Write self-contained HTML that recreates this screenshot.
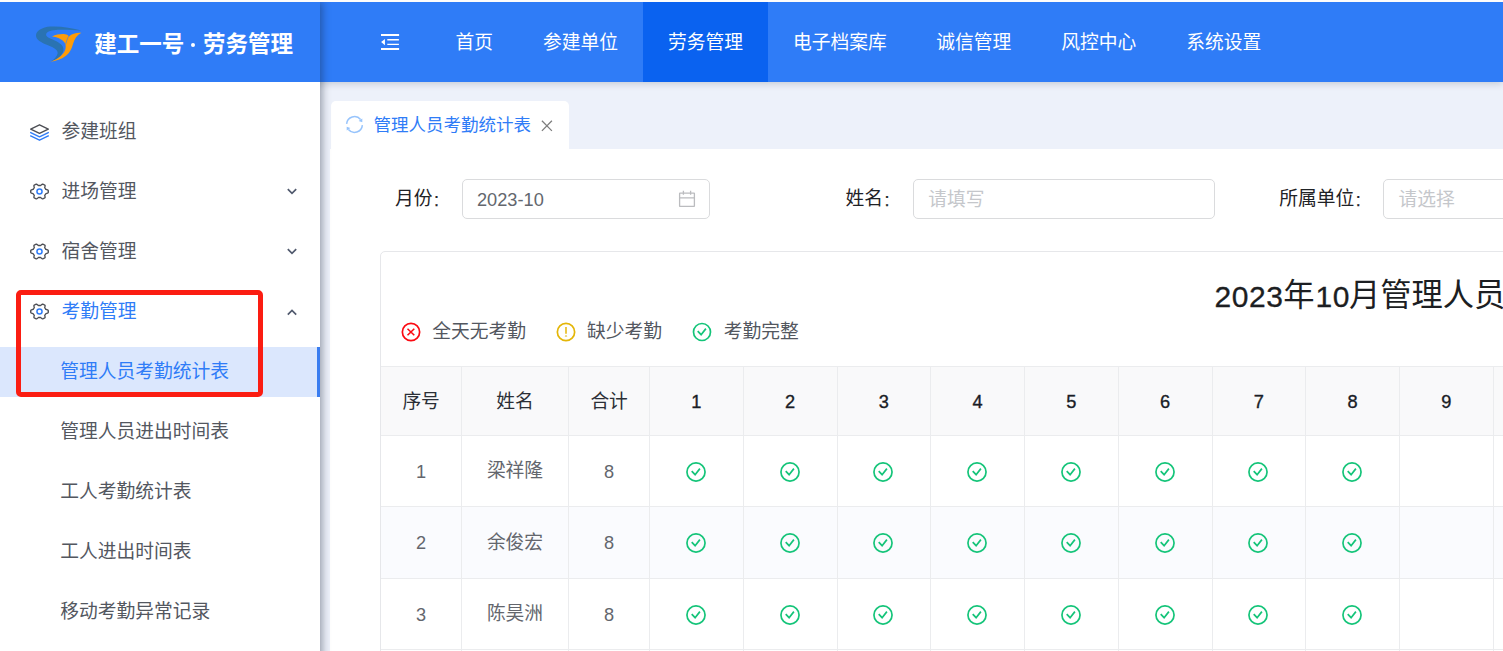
<!DOCTYPE html>
<html lang="zh-CN"><head><meta charset="utf-8"><title>管理人员考勤统计表</title>
<style>
html,body{margin:0;padding:0}
body{width:1503px;height:651px;overflow:hidden;position:relative;background:#edf1fa;font-family:"Liberation Sans","Noto Sans CJK SC",sans-serif}
.abs{position:absolute;display:block}
.t{white-space:nowrap}
.c{text-align:center}
.cj{font-family:"Liberation Sans","Noto Sans CJK SC",sans-serif}
.num{font-family:"Liberation Sans",sans-serif}
.tn{font-size:30px;letter-spacing:0.5px;-webkit-text-stroke:0.3px currentColor}
.hn{-webkit-text-stroke:0.35px currentColor}
.col{display:inline-block;width:6px;text-align:center;margin-left:1px;-webkit-text-stroke:0.25px currentColor;font-size:18px;position:relative;top:1.2px}
.inp{box-sizing:border-box;border:1px solid #dadbdd;border-radius:5px;background:#fff}
.hl{height:1px;background:#ebecee}
.vl{width:1px;background:#ebecee}
.hdr{box-shadow:0 1px 8px rgba(0,21,41,.2)}
.side{background:#fff;box-shadow:2px 0 8px rgba(20,30,50,.42)}
</style></head>
<body>
<header>
<div class="abs hdr" style="left:0;top:2px;width:1503px;height:80px;background:#2f7cf7"></div>
<div class="abs" style="left:643px;top:2px;width:125px;height:80px;background:#0a62f0"></div>
<svg class="abs" style="left:381px;top:33px" width="19" height="18" viewBox="0 0 19 18"><path d="M0 1.05h18.1v1.9H0zM6.3 6h11.6v1.45H6.3zM6.3 10.65h11.6v1.45H6.3zM0 15.05h18.1v1.9H0zM3.95 5.9v6.3L0.1 9.05z" fill="#fff"/></svg>
<div class="abs t " style="left:455.6px;top:27.5px;font-size:18.75px;color:#fff;height:30px;line-height:30px"><span class="cj">首页</span></div>
<div class="abs t " style="left:543.1px;top:27.5px;font-size:18.75px;color:#fff;height:30px;line-height:30px"><span class="cj">参建单位</span></div>
<div class="abs t " style="left:668.1px;top:27.5px;font-size:18.75px;color:#fff;height:30px;line-height:30px"><span class="cj">劳务管理</span></div>
<div class="abs t " style="left:793.1px;top:27.5px;font-size:18.75px;color:#fff;height:30px;line-height:30px"><span class="cj">电子档案库</span></div>
<div class="abs t " style="left:936.3px;top:27.5px;font-size:18.75px;color:#fff;height:30px;line-height:30px"><span class="cj">诚信管理</span></div>
<div class="abs t " style="left:1061.3px;top:27.5px;font-size:18.75px;color:#fff;height:30px;line-height:30px"><span class="cj">风控中心</span></div>
<div class="abs t " style="left:1186.3px;top:27.5px;font-size:18.75px;color:#fff;height:30px;line-height:30px"><span class="cj">系统设置</span></div>
</header>
<main>
<div class="abs" style="left:331px;top:101px;width:238px;height:50px;background:#fff;border-radius:5px 5px 0 0"></div>
<div class="abs" style="left:330px;top:148.5px;width:1180px;height:510px;background:#fff"></div>
<svg class="abs" style="left:345.1px;top:115.1px" width="19" height="19" viewBox="0 0 19 19"><g fill="none" stroke="#97c4fc" stroke-width="1.5"><path d="M1.63 8.81A7.9 7.9 0 0 1 15.6 4.5"/><path d="M17.37 10.19A7.9 7.9 0 0 1 3.4 14.5"/></g><path d="M17.3 3.6V7.3L13.6 6.1ZM1.7 15.4V11.7L5.4 12.9Z" fill="#97c4fc"/></svg>
<div class="abs t " style="left:373.6px;top:110px;font-size:17.5px;color:#2f7cf7;height:30px;line-height:30px"><span class="cj">管理人员考勤统计表</span></div>
<svg class="abs" style="left:540.5px;top:119.5px" width="12" height="12" viewBox="0 0 12 12"><path d="M0.9 0.7L10.9 10.9M10.9 0.7L0.9 10.9" stroke="#7d7d7d" stroke-width="1.25" fill="none"/></svg>
<div class="abs t " style="left:395px;top:184px;font-size:18.75px;color:#1f2226;height:30px;line-height:30px"><span class="cj">月份</span><span class="col">:</span></div>
<div class="abs inp" style="left:462px;top:179px;width:248px;height:40px"></div>
<div class="abs t " style="left:477px;top:184.5px;font-size:18.2px;color:#63676e;height:30px;line-height:30px">2023-10</div>
<svg class="abs" style="left:678px;top:189.8px" width="18" height="18" viewBox="0 0 18 18"><g fill="none" stroke="#bbbcbf" stroke-width="1.3"><rect x="1.6" y="3.2" width="14.8" height="13.2" rx="0.3"/><path d="M1.6 7.8h14.8M5.4 0.8v4M12.6 0.8v4"/></g></svg>
<div class="abs t " style="left:845.5px;top:184px;font-size:18.75px;color:#1f2226;height:30px;line-height:30px"><span class="cj">姓名</span><span class="col">:</span></div>
<div class="abs inp" style="left:912.5px;top:179px;width:302px;height:40px"></div>
<div class="abs t " style="left:928.3px;top:184.8px;font-size:18.75px;color:#c5c7cb;height:30px;line-height:30px"><span class="cj">请填写</span></div>
<div class="abs t " style="left:1279.3px;top:184px;font-size:18.75px;color:#1f2226;height:30px;line-height:30px"><span class="cj">所属单位</span><span class="col">:</span></div>
<div class="abs inp" style="left:1383px;top:179px;width:200px;height:40px"></div>
<div class="abs t " style="left:1398.4px;top:184.8px;font-size:18.75px;color:#c5c7cb;height:30px;line-height:30px"><span class="cj">请选择</span></div>
<div class="abs" style="left:380px;top:251px;width:1200px;height:500px;border:1px solid #e6e7ea;border-radius:5px"></div>
<div class="abs t nw" style="left:1214.6px;top:282.3px;font-size:31.25px;color:#1c1e22;height:30px;line-height:30px"><span class="num tn">2023</span></div>
<div class="abs t nw" style="left:1283.33px;top:280.6px;font-size:31.25px;color:#1c1e22;height:30px;line-height:30px"><span class="cj">年</span></div>
<div class="abs t nw" style="left:1315.6px;top:282.3px;font-size:31.25px;color:#1c1e22;height:30px;line-height:30px"><span class="num tn">10</span></div>
<div class="abs t nw" style="left:1348.95px;top:280.6px;font-size:31.25px;color:#1c1e22;height:30px;line-height:30px"><span class="cj">月管理人员考勤统计表</span></div>
<svg class="abs" style="left:399.5px;top:321.4px" width="22" height="22" viewBox="-11 -11 22 22"><circle r="8.65" fill="none" stroke="#fb0a12" stroke-width="1.7"/><path d="M-3.5 -3.3 L3.3 3.2 M3.3 -3.3 L-3.5 3.2" fill="none" stroke="#fb0a12" stroke-width="1.55"/></svg>
<div class="abs t " style="left:432.3px;top:317.3px;font-size:18.75px;color:#53575f;height:30px;line-height:30px"><span class="cj">全天无考勤</span></div>
<svg class="abs" style="left:554.5px;top:321.4px" width="22" height="22" viewBox="-11 -11 22 22"><circle r="8.65" fill="none" stroke="#e4b608" stroke-width="1.7"/><path d="M0 -5.0 L0 1.7" fill="none" stroke="#e4b608" stroke-width="1.5"/><path d="M0 2.9 L1.4 4.6 L-1.4 4.6Z" fill="#e4b608"/></svg>
<div class="abs t " style="left:587px;top:317.3px;font-size:18.75px;color:#53575f;height:30px;line-height:30px"><span class="cj">缺少考勤</span></div>
<svg class="abs" style="left:691.1px;top:321.4px" width="22" height="22" viewBox="-11 -11 22 22"><circle r="8.5" fill="none" stroke="#14c479" stroke-width="1.7"/><path d="M-4.3 -0.8 L-0.9 2.7 L3.9 -3.4" fill="none" stroke="#14c479" stroke-width="1.7"/></svg>
<div class="abs t " style="left:723.7px;top:317.3px;font-size:18.75px;color:#53575f;height:30px;line-height:30px"><span class="cj">考勤完整</span></div>
<div class="abs" style="left:381px;top:366.5px;width:1200px;height:68.75px;background:#f9f9fa"></div>
<div class="abs" style="left:381px;top:506.75px;width:1200px;height:71.5px;background:#fafbfe"></div>
<div class="abs hl" style="left:381px;top:366px;width:1200px"></div>
<div class="abs hl" style="left:381px;top:434.75px;width:1200px"></div>
<div class="abs hl" style="left:381px;top:506.25px;width:1200px"></div>
<div class="abs hl" style="left:381px;top:577.75px;width:1200px"></div>
<div class="abs hl" style="left:381px;top:649.25px;width:1200px"></div>
<div class="abs vl" style="left:460.75px;top:366.5px;height:300px"></div>
<div class="abs vl" style="left:568.25px;top:366.5px;height:300px"></div>
<div class="abs vl" style="left:649px;top:366.5px;height:300px"></div>
<div class="abs vl" style="left:742.75px;top:366.5px;height:300px"></div>
<div class="abs vl" style="left:836.5px;top:366.5px;height:300px"></div>
<div class="abs vl" style="left:930.25px;top:366.5px;height:300px"></div>
<div class="abs vl" style="left:1024px;top:366.5px;height:300px"></div>
<div class="abs vl" style="left:1117.75px;top:366.5px;height:300px"></div>
<div class="abs vl" style="left:1211.5px;top:366.5px;height:300px"></div>
<div class="abs vl" style="left:1305.25px;top:366.5px;height:300px"></div>
<div class="abs vl" style="left:1399px;top:366.5px;height:300px"></div>
<div class="abs vl" style="left:1492.75px;top:366.5px;height:300px"></div>
<div class="abs vl" style="left:1586.5px;top:366.5px;height:300px"></div>
<div class="abs vl" style="left:1680.25px;top:366.5px;height:300px"></div>
<div class="abs t c" style="left:321.125px;top:386.675px;width:200px;font-size:18.75px;color:#2b2f36;height:30px;line-height:30px"><span class="cj">序号</span></div>
<div class="abs t c" style="left:415px;top:386.675px;width:200px;font-size:18.75px;color:#2b2f36;height:30px;line-height:30px"><span class="cj">姓名</span></div>
<div class="abs t c" style="left:509.125px;top:386.675px;width:200px;font-size:18.75px;color:#2b2f36;height:30px;line-height:30px"><span class="cj">合计</span></div>
<div class="abs t c" style="left:596.375px;top:387.475px;width:200px;font-size:18.2px;color:#1a1d26;height:30px;line-height:30px"><span class="num hn">1</span></div>
<div class="abs t c" style="left:690.125px;top:387.475px;width:200px;font-size:18.2px;color:#1a1d26;height:30px;line-height:30px"><span class="num hn">2</span></div>
<div class="abs t c" style="left:783.875px;top:387.475px;width:200px;font-size:18.2px;color:#1a1d26;height:30px;line-height:30px"><span class="num hn">3</span></div>
<div class="abs t c" style="left:877.625px;top:387.475px;width:200px;font-size:18.2px;color:#1a1d26;height:30px;line-height:30px"><span class="num hn">4</span></div>
<div class="abs t c" style="left:971.375px;top:387.475px;width:200px;font-size:18.2px;color:#1a1d26;height:30px;line-height:30px"><span class="num hn">5</span></div>
<div class="abs t c" style="left:1065.12px;top:387.475px;width:200px;font-size:18.2px;color:#1a1d26;height:30px;line-height:30px"><span class="num hn">6</span></div>
<div class="abs t c" style="left:1158.88px;top:387.475px;width:200px;font-size:18.2px;color:#1a1d26;height:30px;line-height:30px"><span class="num hn">7</span></div>
<div class="abs t c" style="left:1252.62px;top:387.475px;width:200px;font-size:18.2px;color:#1a1d26;height:30px;line-height:30px"><span class="num hn">8</span></div>
<div class="abs t c" style="left:1346.38px;top:387.475px;width:200px;font-size:18.2px;color:#1a1d26;height:30px;line-height:30px"><span class="num hn">9</span></div>
<div class="abs t c" style="left:321.125px;top:456.8px;width:200px;font-size:18.2px;color:#63666d;height:30px;line-height:30px"><span class="num">1</span></div>
<div class="abs t c" style="left:415px;top:456.3px;width:200px;font-size:18.75px;color:#63666d;height:30px;line-height:30px"><span class="cj">梁祥隆</span></div>
<div class="abs t c" style="left:509.125px;top:456.8px;width:200px;font-size:18.2px;color:#63666d;height:30px;line-height:30px"><span class="num">8</span></div>
<svg class="abs" style="left:684.975px;top:460.9px" width="22" height="22" viewBox="-11 -11 22 22"><circle r="9.05" fill="none" stroke="#14c479" stroke-width="1.7"/><path d="M-4.3 -0.8 L-0.9 2.7 L3.9 -3.4" fill="none" stroke="#14c479" stroke-width="1.7"/></svg>
<svg class="abs" style="left:778.725px;top:460.9px" width="22" height="22" viewBox="-11 -11 22 22"><circle r="9.05" fill="none" stroke="#14c479" stroke-width="1.7"/><path d="M-4.3 -0.8 L-0.9 2.7 L3.9 -3.4" fill="none" stroke="#14c479" stroke-width="1.7"/></svg>
<svg class="abs" style="left:872.475px;top:460.9px" width="22" height="22" viewBox="-11 -11 22 22"><circle r="9.05" fill="none" stroke="#14c479" stroke-width="1.7"/><path d="M-4.3 -0.8 L-0.9 2.7 L3.9 -3.4" fill="none" stroke="#14c479" stroke-width="1.7"/></svg>
<svg class="abs" style="left:966.225px;top:460.9px" width="22" height="22" viewBox="-11 -11 22 22"><circle r="9.05" fill="none" stroke="#14c479" stroke-width="1.7"/><path d="M-4.3 -0.8 L-0.9 2.7 L3.9 -3.4" fill="none" stroke="#14c479" stroke-width="1.7"/></svg>
<svg class="abs" style="left:1059.97px;top:460.9px" width="22" height="22" viewBox="-11 -11 22 22"><circle r="9.05" fill="none" stroke="#14c479" stroke-width="1.7"/><path d="M-4.3 -0.8 L-0.9 2.7 L3.9 -3.4" fill="none" stroke="#14c479" stroke-width="1.7"/></svg>
<svg class="abs" style="left:1153.72px;top:460.9px" width="22" height="22" viewBox="-11 -11 22 22"><circle r="9.05" fill="none" stroke="#14c479" stroke-width="1.7"/><path d="M-4.3 -0.8 L-0.9 2.7 L3.9 -3.4" fill="none" stroke="#14c479" stroke-width="1.7"/></svg>
<svg class="abs" style="left:1247.47px;top:460.9px" width="22" height="22" viewBox="-11 -11 22 22"><circle r="9.05" fill="none" stroke="#14c479" stroke-width="1.7"/><path d="M-4.3 -0.8 L-0.9 2.7 L3.9 -3.4" fill="none" stroke="#14c479" stroke-width="1.7"/></svg>
<svg class="abs" style="left:1341.22px;top:460.9px" width="22" height="22" viewBox="-11 -11 22 22"><circle r="9.05" fill="none" stroke="#14c479" stroke-width="1.7"/><path d="M-4.3 -0.8 L-0.9 2.7 L3.9 -3.4" fill="none" stroke="#14c479" stroke-width="1.7"/></svg>
<div class="abs t c" style="left:321.125px;top:528.3px;width:200px;font-size:18.2px;color:#63666d;height:30px;line-height:30px"><span class="num">2</span></div>
<div class="abs t c" style="left:415px;top:527.8px;width:200px;font-size:18.75px;color:#63666d;height:30px;line-height:30px"><span class="cj">余俊宏</span></div>
<div class="abs t c" style="left:509.125px;top:528.3px;width:200px;font-size:18.2px;color:#63666d;height:30px;line-height:30px"><span class="num">8</span></div>
<svg class="abs" style="left:684.975px;top:532.4px" width="22" height="22" viewBox="-11 -11 22 22"><circle r="9.05" fill="none" stroke="#14c479" stroke-width="1.7"/><path d="M-4.3 -0.8 L-0.9 2.7 L3.9 -3.4" fill="none" stroke="#14c479" stroke-width="1.7"/></svg>
<svg class="abs" style="left:778.725px;top:532.4px" width="22" height="22" viewBox="-11 -11 22 22"><circle r="9.05" fill="none" stroke="#14c479" stroke-width="1.7"/><path d="M-4.3 -0.8 L-0.9 2.7 L3.9 -3.4" fill="none" stroke="#14c479" stroke-width="1.7"/></svg>
<svg class="abs" style="left:872.475px;top:532.4px" width="22" height="22" viewBox="-11 -11 22 22"><circle r="9.05" fill="none" stroke="#14c479" stroke-width="1.7"/><path d="M-4.3 -0.8 L-0.9 2.7 L3.9 -3.4" fill="none" stroke="#14c479" stroke-width="1.7"/></svg>
<svg class="abs" style="left:966.225px;top:532.4px" width="22" height="22" viewBox="-11 -11 22 22"><circle r="9.05" fill="none" stroke="#14c479" stroke-width="1.7"/><path d="M-4.3 -0.8 L-0.9 2.7 L3.9 -3.4" fill="none" stroke="#14c479" stroke-width="1.7"/></svg>
<svg class="abs" style="left:1059.97px;top:532.4px" width="22" height="22" viewBox="-11 -11 22 22"><circle r="9.05" fill="none" stroke="#14c479" stroke-width="1.7"/><path d="M-4.3 -0.8 L-0.9 2.7 L3.9 -3.4" fill="none" stroke="#14c479" stroke-width="1.7"/></svg>
<svg class="abs" style="left:1153.72px;top:532.4px" width="22" height="22" viewBox="-11 -11 22 22"><circle r="9.05" fill="none" stroke="#14c479" stroke-width="1.7"/><path d="M-4.3 -0.8 L-0.9 2.7 L3.9 -3.4" fill="none" stroke="#14c479" stroke-width="1.7"/></svg>
<svg class="abs" style="left:1247.47px;top:532.4px" width="22" height="22" viewBox="-11 -11 22 22"><circle r="9.05" fill="none" stroke="#14c479" stroke-width="1.7"/><path d="M-4.3 -0.8 L-0.9 2.7 L3.9 -3.4" fill="none" stroke="#14c479" stroke-width="1.7"/></svg>
<svg class="abs" style="left:1341.22px;top:532.4px" width="22" height="22" viewBox="-11 -11 22 22"><circle r="9.05" fill="none" stroke="#14c479" stroke-width="1.7"/><path d="M-4.3 -0.8 L-0.9 2.7 L3.9 -3.4" fill="none" stroke="#14c479" stroke-width="1.7"/></svg>
<div class="abs t c" style="left:321.125px;top:599.8px;width:200px;font-size:18.2px;color:#63666d;height:30px;line-height:30px"><span class="num">3</span></div>
<div class="abs t c" style="left:415px;top:599.3px;width:200px;font-size:18.75px;color:#63666d;height:30px;line-height:30px"><span class="cj">陈昊洲</span></div>
<div class="abs t c" style="left:509.125px;top:599.8px;width:200px;font-size:18.2px;color:#63666d;height:30px;line-height:30px"><span class="num">8</span></div>
<svg class="abs" style="left:684.975px;top:603.9px" width="22" height="22" viewBox="-11 -11 22 22"><circle r="9.05" fill="none" stroke="#14c479" stroke-width="1.7"/><path d="M-4.3 -0.8 L-0.9 2.7 L3.9 -3.4" fill="none" stroke="#14c479" stroke-width="1.7"/></svg>
<svg class="abs" style="left:778.725px;top:603.9px" width="22" height="22" viewBox="-11 -11 22 22"><circle r="9.05" fill="none" stroke="#14c479" stroke-width="1.7"/><path d="M-4.3 -0.8 L-0.9 2.7 L3.9 -3.4" fill="none" stroke="#14c479" stroke-width="1.7"/></svg>
<svg class="abs" style="left:872.475px;top:603.9px" width="22" height="22" viewBox="-11 -11 22 22"><circle r="9.05" fill="none" stroke="#14c479" stroke-width="1.7"/><path d="M-4.3 -0.8 L-0.9 2.7 L3.9 -3.4" fill="none" stroke="#14c479" stroke-width="1.7"/></svg>
<svg class="abs" style="left:966.225px;top:603.9px" width="22" height="22" viewBox="-11 -11 22 22"><circle r="9.05" fill="none" stroke="#14c479" stroke-width="1.7"/><path d="M-4.3 -0.8 L-0.9 2.7 L3.9 -3.4" fill="none" stroke="#14c479" stroke-width="1.7"/></svg>
<svg class="abs" style="left:1059.97px;top:603.9px" width="22" height="22" viewBox="-11 -11 22 22"><circle r="9.05" fill="none" stroke="#14c479" stroke-width="1.7"/><path d="M-4.3 -0.8 L-0.9 2.7 L3.9 -3.4" fill="none" stroke="#14c479" stroke-width="1.7"/></svg>
<svg class="abs" style="left:1153.72px;top:603.9px" width="22" height="22" viewBox="-11 -11 22 22"><circle r="9.05" fill="none" stroke="#14c479" stroke-width="1.7"/><path d="M-4.3 -0.8 L-0.9 2.7 L3.9 -3.4" fill="none" stroke="#14c479" stroke-width="1.7"/></svg>
<svg class="abs" style="left:1247.47px;top:603.9px" width="22" height="22" viewBox="-11 -11 22 22"><circle r="9.05" fill="none" stroke="#14c479" stroke-width="1.7"/><path d="M-4.3 -0.8 L-0.9 2.7 L3.9 -3.4" fill="none" stroke="#14c479" stroke-width="1.7"/></svg>
<svg class="abs" style="left:1341.22px;top:603.9px" width="22" height="22" viewBox="-11 -11 22 22"><circle r="9.05" fill="none" stroke="#14c479" stroke-width="1.7"/><path d="M-4.3 -0.8 L-0.9 2.7 L3.9 -3.4" fill="none" stroke="#14c479" stroke-width="1.7"/></svg>
</main>
<aside>
<div class="abs side" style="left:0;top:2px;width:320px;height:660px"></div>
<div class="abs" style="left:0;top:2px;width:320px;height:80px;background:#2f7cf7"></div>
<svg class="abs" style="left:30px;top:20px" width="60" height="48" viewBox="30 20 60 48"><path d="M81.5 30.6C72 27.8 60 26 50.5 26.6C42 27.2 36 31 36 35.4C36 39.6 41 42.4 48 45.2C54 47.6 58.2 50 57.6 53.4C57 56.6 54 59.4 50.6 61.6C57 59.4 62.6 55.4 63.4 50.4C64.2 45.4 58.6 42.2 52.6 39.6C47.6 37.4 45.6 36 46.2 34C47 31.4 52 30 58 29.8C66 29.6 75 30 81.5 30.6Z" fill="#2a73b2"/><path d="M52 36.6C56.4 34.4 61.4 33.8 65 34.2C67 34.6 68.4 35.4 69 36.4C72 33.6 76.6 32.4 81.4 32.8C77 35 74.4 39 73 44C71.6 49 70 52.6 65.6 56C61.4 59.2 56 61 50.2 61.8C56.4 59.6 61.6 56.4 64.2 52C65.8 49.2 66 46.6 65.4 44.2C64.4 41.4 61.6 39.4 58.4 38C56.4 37.2 54.2 36.8 52 36.6Z" fill="#ff9c08"/><path d="M68.6 36.2C67.4 38.8 66.2 41.6 65.6 44.4" stroke="#3c7ee8" stroke-width="0.6" fill="none"/></svg>
<div class="abs t nw" style="left:94.3px;top:29.5px;font-size:22.5px;color:#fff;height:30px;line-height:30px"><span class="cj" style="font-weight:bold">建工一号</span><span style="display:inline-block;width:18.6px;height:10px;position:relative"><i style="position:absolute;left:6.4px;top:1.7px;width:4.2px;height:4.2px;border-radius:50%;background:#fff"></i></span><span class="cj" style="font-weight:bold">劳务管理</span></div>
<svg class="abs" style="left:30px;top:123.8px" width="19" height="18" viewBox="0 0 19 18"><path d="M9.5 0.8L18.3 5.1L9.5 9.4L0.7 5.1Z" fill="none" stroke="#4d4f55" stroke-width="1.35" stroke-linejoin="round"/><path d="M0.7 8.6L9.5 12.9L18.3 8.6M0.7 11.9L9.5 16.2L18.3 11.9" fill="none" stroke="#2f7cf7" stroke-width="1.4" stroke-linejoin="round" stroke-linecap="round"/></svg>
<div class="abs t " style="left:61.6px;top:117px;font-size:18.75px;color:#53575f;height:30px;line-height:30px"><span class="cj">参建班组</span></div>
<svg class="abs" style="left:29px;top:182px" width="21" height="19" viewBox="0 0 21 19"><path d="M19.30 9.50 L19.30 9.71 L19.29 9.91 L19.27 10.12 L19.25 10.33 L19.22 10.53 L19.19 10.74 L18.92 10.90 L18.62 11.05 L18.31 11.19 L17.99 11.31 L17.66 11.41 L17.35 11.50 L17.04 11.58 L16.76 11.66 L16.69 11.81 L16.62 11.95 L16.55 12.10 L16.47 12.24 L16.39 12.38 L16.30 12.52 L16.21 12.65 L16.12 12.78 L16.02 12.92 L15.92 13.04 L15.82 13.17 L15.71 13.30 L15.78 13.56 L15.85 13.84 L15.92 14.13 L15.98 14.43 L16.03 14.74 L16.05 15.05 L16.06 15.36 L16.04 15.65 L15.86 15.78 L15.67 15.91 L15.48 16.03 L15.29 16.14 L15.10 16.25 L14.90 16.36 L14.70 16.46 L14.50 16.56 L14.29 16.65 L14.08 16.74 L13.87 16.82 L13.65 16.89 L13.36 16.76 L13.07 16.61 L12.78 16.43 L12.51 16.24 L12.24 16.04 L12.00 15.84 L11.76 15.64 L11.55 15.46 L11.37 15.48 L11.20 15.50 L11.03 15.51 L10.85 15.52 L10.68 15.53 L10.50 15.53 L10.32 15.53 L10.15 15.52 L9.97 15.51 L9.80 15.50 L9.63 15.48 L9.45 15.46 L9.24 15.64 L9.00 15.84 L8.76 16.04 L8.49 16.24 L8.22 16.43 L7.93 16.61 L7.64 16.76 L7.35 16.89 L7.13 16.82 L6.92 16.74 L6.71 16.65 L6.50 16.56 L6.30 16.46 L6.10 16.36 L5.90 16.25 L5.71 16.14 L5.52 16.03 L5.33 15.91 L5.14 15.78 L4.96 15.65 L4.94 15.36 L4.95 15.05 L4.97 14.74 L5.02 14.43 L5.08 14.13 L5.15 13.84 L5.22 13.56 L5.29 13.30 L5.18 13.17 L5.08 13.04 L4.98 12.92 L4.88 12.78 L4.79 12.65 L4.70 12.52 L4.61 12.38 L4.53 12.24 L4.45 12.10 L4.38 11.95 L4.31 11.81 L4.24 11.66 L3.96 11.58 L3.65 11.50 L3.34 11.41 L3.01 11.31 L2.69 11.19 L2.38 11.05 L2.08 10.90 L1.81 10.74 L1.78 10.53 L1.75 10.33 L1.73 10.12 L1.71 9.91 L1.70 9.71 L1.70 9.50 L1.70 9.29 L1.71 9.09 L1.73 8.88 L1.75 8.67 L1.78 8.47 L1.81 8.26 L2.08 8.10 L2.38 7.95 L2.69 7.81 L3.01 7.69 L3.34 7.59 L3.65 7.50 L3.96 7.42 L4.24 7.34 L4.31 7.19 L4.38 7.05 L4.45 6.90 L4.53 6.76 L4.61 6.62 L4.70 6.49 L4.79 6.35 L4.88 6.22 L4.98 6.08 L5.08 5.96 L5.18 5.83 L5.29 5.70 L5.22 5.44 L5.15 5.16 L5.08 4.87 L5.02 4.57 L4.97 4.26 L4.95 3.95 L4.94 3.64 L4.96 3.35 L5.14 3.22 L5.33 3.09 L5.52 2.97 L5.71 2.86 L5.90 2.75 L6.10 2.64 L6.30 2.54 L6.50 2.44 L6.71 2.35 L6.92 2.26 L7.13 2.18 L7.35 2.11 L7.64 2.24 L7.93 2.39 L8.22 2.57 L8.49 2.76 L8.76 2.96 L9.00 3.16 L9.24 3.36 L9.45 3.54 L9.63 3.52 L9.80 3.50 L9.97 3.49 L10.15 3.48 L10.32 3.47 L10.50 3.47 L10.68 3.47 L10.85 3.48 L11.03 3.49 L11.20 3.50 L11.37 3.52 L11.55 3.54 L11.76 3.36 L12.00 3.16 L12.24 2.96 L12.51 2.76 L12.78 2.57 L13.07 2.39 L13.36 2.24 L13.65 2.11 L13.87 2.18 L14.08 2.26 L14.29 2.35 L14.50 2.44 L14.70 2.54 L14.90 2.64 L15.10 2.75 L15.29 2.86 L15.48 2.97 L15.67 3.09 L15.86 3.22 L16.04 3.35 L16.06 3.64 L16.05 3.95 L16.03 4.26 L15.98 4.57 L15.92 4.87 L15.85 5.16 L15.78 5.44 L15.71 5.70 L15.82 5.83 L15.92 5.96 L16.02 6.08 L16.12 6.22 L16.21 6.35 L16.30 6.49 L16.39 6.62 L16.47 6.76 L16.55 6.90 L16.62 7.05 L16.69 7.19 L16.76 7.34 L17.04 7.42 L17.35 7.50 L17.66 7.59 L17.99 7.69 L18.31 7.81 L18.62 7.95 L18.92 8.10 L19.19 8.26 L19.22 8.47 L19.25 8.67 L19.27 8.88 L19.29 9.09 L19.30 9.29Z" fill="none" stroke="#4d4f55" stroke-width="1.35" stroke-linejoin="round"/><circle cx="10.5" cy="9.5" r="2.55" fill="none" stroke="#2f7cf7" stroke-width="1.5"/></svg>
<div class="abs t " style="left:61.6px;top:177px;font-size:18.75px;color:#53575f;height:30px;line-height:30px"><span class="cj">进场管理</span></div>
<svg class="abs" style="left:287px;top:188.2px" width="10" height="7" viewBox="0 0 10 7"><path d="M0.8 1.2 L5 5.4 L9.2 1.2" fill="none" stroke="#515a6e" stroke-width="1.7"/></svg>
<svg class="abs" style="left:29px;top:242px" width="21" height="19" viewBox="0 0 21 19"><path d="M19.30 9.50 L19.30 9.71 L19.29 9.91 L19.27 10.12 L19.25 10.33 L19.22 10.53 L19.19 10.74 L18.92 10.90 L18.62 11.05 L18.31 11.19 L17.99 11.31 L17.66 11.41 L17.35 11.50 L17.04 11.58 L16.76 11.66 L16.69 11.81 L16.62 11.95 L16.55 12.10 L16.47 12.24 L16.39 12.38 L16.30 12.52 L16.21 12.65 L16.12 12.78 L16.02 12.92 L15.92 13.04 L15.82 13.17 L15.71 13.30 L15.78 13.56 L15.85 13.84 L15.92 14.13 L15.98 14.43 L16.03 14.74 L16.05 15.05 L16.06 15.36 L16.04 15.65 L15.86 15.78 L15.67 15.91 L15.48 16.03 L15.29 16.14 L15.10 16.25 L14.90 16.36 L14.70 16.46 L14.50 16.56 L14.29 16.65 L14.08 16.74 L13.87 16.82 L13.65 16.89 L13.36 16.76 L13.07 16.61 L12.78 16.43 L12.51 16.24 L12.24 16.04 L12.00 15.84 L11.76 15.64 L11.55 15.46 L11.37 15.48 L11.20 15.50 L11.03 15.51 L10.85 15.52 L10.68 15.53 L10.50 15.53 L10.32 15.53 L10.15 15.52 L9.97 15.51 L9.80 15.50 L9.63 15.48 L9.45 15.46 L9.24 15.64 L9.00 15.84 L8.76 16.04 L8.49 16.24 L8.22 16.43 L7.93 16.61 L7.64 16.76 L7.35 16.89 L7.13 16.82 L6.92 16.74 L6.71 16.65 L6.50 16.56 L6.30 16.46 L6.10 16.36 L5.90 16.25 L5.71 16.14 L5.52 16.03 L5.33 15.91 L5.14 15.78 L4.96 15.65 L4.94 15.36 L4.95 15.05 L4.97 14.74 L5.02 14.43 L5.08 14.13 L5.15 13.84 L5.22 13.56 L5.29 13.30 L5.18 13.17 L5.08 13.04 L4.98 12.92 L4.88 12.78 L4.79 12.65 L4.70 12.52 L4.61 12.38 L4.53 12.24 L4.45 12.10 L4.38 11.95 L4.31 11.81 L4.24 11.66 L3.96 11.58 L3.65 11.50 L3.34 11.41 L3.01 11.31 L2.69 11.19 L2.38 11.05 L2.08 10.90 L1.81 10.74 L1.78 10.53 L1.75 10.33 L1.73 10.12 L1.71 9.91 L1.70 9.71 L1.70 9.50 L1.70 9.29 L1.71 9.09 L1.73 8.88 L1.75 8.67 L1.78 8.47 L1.81 8.26 L2.08 8.10 L2.38 7.95 L2.69 7.81 L3.01 7.69 L3.34 7.59 L3.65 7.50 L3.96 7.42 L4.24 7.34 L4.31 7.19 L4.38 7.05 L4.45 6.90 L4.53 6.76 L4.61 6.62 L4.70 6.49 L4.79 6.35 L4.88 6.22 L4.98 6.08 L5.08 5.96 L5.18 5.83 L5.29 5.70 L5.22 5.44 L5.15 5.16 L5.08 4.87 L5.02 4.57 L4.97 4.26 L4.95 3.95 L4.94 3.64 L4.96 3.35 L5.14 3.22 L5.33 3.09 L5.52 2.97 L5.71 2.86 L5.90 2.75 L6.10 2.64 L6.30 2.54 L6.50 2.44 L6.71 2.35 L6.92 2.26 L7.13 2.18 L7.35 2.11 L7.64 2.24 L7.93 2.39 L8.22 2.57 L8.49 2.76 L8.76 2.96 L9.00 3.16 L9.24 3.36 L9.45 3.54 L9.63 3.52 L9.80 3.50 L9.97 3.49 L10.15 3.48 L10.32 3.47 L10.50 3.47 L10.68 3.47 L10.85 3.48 L11.03 3.49 L11.20 3.50 L11.37 3.52 L11.55 3.54 L11.76 3.36 L12.00 3.16 L12.24 2.96 L12.51 2.76 L12.78 2.57 L13.07 2.39 L13.36 2.24 L13.65 2.11 L13.87 2.18 L14.08 2.26 L14.29 2.35 L14.50 2.44 L14.70 2.54 L14.90 2.64 L15.10 2.75 L15.29 2.86 L15.48 2.97 L15.67 3.09 L15.86 3.22 L16.04 3.35 L16.06 3.64 L16.05 3.95 L16.03 4.26 L15.98 4.57 L15.92 4.87 L15.85 5.16 L15.78 5.44 L15.71 5.70 L15.82 5.83 L15.92 5.96 L16.02 6.08 L16.12 6.22 L16.21 6.35 L16.30 6.49 L16.39 6.62 L16.47 6.76 L16.55 6.90 L16.62 7.05 L16.69 7.19 L16.76 7.34 L17.04 7.42 L17.35 7.50 L17.66 7.59 L17.99 7.69 L18.31 7.81 L18.62 7.95 L18.92 8.10 L19.19 8.26 L19.22 8.47 L19.25 8.67 L19.27 8.88 L19.29 9.09 L19.30 9.29Z" fill="none" stroke="#4d4f55" stroke-width="1.35" stroke-linejoin="round"/><circle cx="10.5" cy="9.5" r="2.55" fill="none" stroke="#2f7cf7" stroke-width="1.5"/></svg>
<div class="abs t " style="left:61.6px;top:237px;font-size:18.75px;color:#53575f;height:30px;line-height:30px"><span class="cj">宿舍管理</span></div>
<svg class="abs" style="left:287px;top:248.2px" width="10" height="7" viewBox="0 0 10 7"><path d="M0.8 1.2 L5 5.4 L9.2 1.2" fill="none" stroke="#515a6e" stroke-width="1.7"/></svg>
<div class="abs" style="left:0;top:347px;width:320px;height:50px;background:#dbe7fd"></div>
<div class="abs" style="left:317px;top:347px;width:3px;height:50px;background:#3a7df0"></div>
<svg class="abs" style="left:29px;top:302px" width="21" height="19" viewBox="0 0 21 19"><path d="M19.30 9.50 L19.30 9.71 L19.29 9.91 L19.27 10.12 L19.25 10.33 L19.22 10.53 L19.19 10.74 L18.92 10.90 L18.62 11.05 L18.31 11.19 L17.99 11.31 L17.66 11.41 L17.35 11.50 L17.04 11.58 L16.76 11.66 L16.69 11.81 L16.62 11.95 L16.55 12.10 L16.47 12.24 L16.39 12.38 L16.30 12.52 L16.21 12.65 L16.12 12.78 L16.02 12.92 L15.92 13.04 L15.82 13.17 L15.71 13.30 L15.78 13.56 L15.85 13.84 L15.92 14.13 L15.98 14.43 L16.03 14.74 L16.05 15.05 L16.06 15.36 L16.04 15.65 L15.86 15.78 L15.67 15.91 L15.48 16.03 L15.29 16.14 L15.10 16.25 L14.90 16.36 L14.70 16.46 L14.50 16.56 L14.29 16.65 L14.08 16.74 L13.87 16.82 L13.65 16.89 L13.36 16.76 L13.07 16.61 L12.78 16.43 L12.51 16.24 L12.24 16.04 L12.00 15.84 L11.76 15.64 L11.55 15.46 L11.37 15.48 L11.20 15.50 L11.03 15.51 L10.85 15.52 L10.68 15.53 L10.50 15.53 L10.32 15.53 L10.15 15.52 L9.97 15.51 L9.80 15.50 L9.63 15.48 L9.45 15.46 L9.24 15.64 L9.00 15.84 L8.76 16.04 L8.49 16.24 L8.22 16.43 L7.93 16.61 L7.64 16.76 L7.35 16.89 L7.13 16.82 L6.92 16.74 L6.71 16.65 L6.50 16.56 L6.30 16.46 L6.10 16.36 L5.90 16.25 L5.71 16.14 L5.52 16.03 L5.33 15.91 L5.14 15.78 L4.96 15.65 L4.94 15.36 L4.95 15.05 L4.97 14.74 L5.02 14.43 L5.08 14.13 L5.15 13.84 L5.22 13.56 L5.29 13.30 L5.18 13.17 L5.08 13.04 L4.98 12.92 L4.88 12.78 L4.79 12.65 L4.70 12.52 L4.61 12.38 L4.53 12.24 L4.45 12.10 L4.38 11.95 L4.31 11.81 L4.24 11.66 L3.96 11.58 L3.65 11.50 L3.34 11.41 L3.01 11.31 L2.69 11.19 L2.38 11.05 L2.08 10.90 L1.81 10.74 L1.78 10.53 L1.75 10.33 L1.73 10.12 L1.71 9.91 L1.70 9.71 L1.70 9.50 L1.70 9.29 L1.71 9.09 L1.73 8.88 L1.75 8.67 L1.78 8.47 L1.81 8.26 L2.08 8.10 L2.38 7.95 L2.69 7.81 L3.01 7.69 L3.34 7.59 L3.65 7.50 L3.96 7.42 L4.24 7.34 L4.31 7.19 L4.38 7.05 L4.45 6.90 L4.53 6.76 L4.61 6.62 L4.70 6.49 L4.79 6.35 L4.88 6.22 L4.98 6.08 L5.08 5.96 L5.18 5.83 L5.29 5.70 L5.22 5.44 L5.15 5.16 L5.08 4.87 L5.02 4.57 L4.97 4.26 L4.95 3.95 L4.94 3.64 L4.96 3.35 L5.14 3.22 L5.33 3.09 L5.52 2.97 L5.71 2.86 L5.90 2.75 L6.10 2.64 L6.30 2.54 L6.50 2.44 L6.71 2.35 L6.92 2.26 L7.13 2.18 L7.35 2.11 L7.64 2.24 L7.93 2.39 L8.22 2.57 L8.49 2.76 L8.76 2.96 L9.00 3.16 L9.24 3.36 L9.45 3.54 L9.63 3.52 L9.80 3.50 L9.97 3.49 L10.15 3.48 L10.32 3.47 L10.50 3.47 L10.68 3.47 L10.85 3.48 L11.03 3.49 L11.20 3.50 L11.37 3.52 L11.55 3.54 L11.76 3.36 L12.00 3.16 L12.24 2.96 L12.51 2.76 L12.78 2.57 L13.07 2.39 L13.36 2.24 L13.65 2.11 L13.87 2.18 L14.08 2.26 L14.29 2.35 L14.50 2.44 L14.70 2.54 L14.90 2.64 L15.10 2.75 L15.29 2.86 L15.48 2.97 L15.67 3.09 L15.86 3.22 L16.04 3.35 L16.06 3.64 L16.05 3.95 L16.03 4.26 L15.98 4.57 L15.92 4.87 L15.85 5.16 L15.78 5.44 L15.71 5.70 L15.82 5.83 L15.92 5.96 L16.02 6.08 L16.12 6.22 L16.21 6.35 L16.30 6.49 L16.39 6.62 L16.47 6.76 L16.55 6.90 L16.62 7.05 L16.69 7.19 L16.76 7.34 L17.04 7.42 L17.35 7.50 L17.66 7.59 L17.99 7.69 L18.31 7.81 L18.62 7.95 L18.92 8.10 L19.19 8.26 L19.22 8.47 L19.25 8.67 L19.27 8.88 L19.29 9.09 L19.30 9.29Z" fill="none" stroke="#4d4f55" stroke-width="1.35" stroke-linejoin="round"/><circle cx="10.5" cy="9.5" r="2.55" fill="none" stroke="#2f7cf7" stroke-width="1.5"/></svg>
<div class="abs t " style="left:61.6px;top:297px;font-size:18.75px;color:#2f7cf7;height:30px;line-height:30px"><span class="cj">考勤管理</span></div>
<svg class="abs" style="left:287px;top:308.8px" width="10" height="7" viewBox="0 0 10 7"><path d="M0.8 5.6 L5 1.4 L9.2 5.6" fill="none" stroke="#515a6e" stroke-width="1.7"/></svg>
<div class="abs t " style="left:60.2px;top:357px;font-size:18.75px;color:#2f7cf7;height:30px;line-height:30px"><span class="cj">管理人员考勤统计表</span></div>
<div class="abs t " style="left:60.2px;top:417px;font-size:18.75px;color:#53575f;height:30px;line-height:30px"><span class="cj">管理人员进出时间表</span></div>
<div class="abs t " style="left:60.2px;top:477px;font-size:18.75px;color:#53575f;height:30px;line-height:30px"><span class="cj">工人考勤统计表</span></div>
<div class="abs t " style="left:60.2px;top:537px;font-size:18.75px;color:#53575f;height:30px;line-height:30px"><span class="cj">工人进出时间表</span></div>
<div class="abs t " style="left:60.2px;top:597px;font-size:18.75px;color:#53575f;height:30px;line-height:30px"><span class="cj">移动考勤异常记录</span></div>
</aside>
<div class="abs" style="left:15.7px;top:290.3px;width:237px;height:97px;border:5px solid #fb1d12;border-radius:5px"></div>
<div class="abs" style="left:0;top:0;width:1503px;height:2px;background:#fdfcfb"></div>
</body></html>
